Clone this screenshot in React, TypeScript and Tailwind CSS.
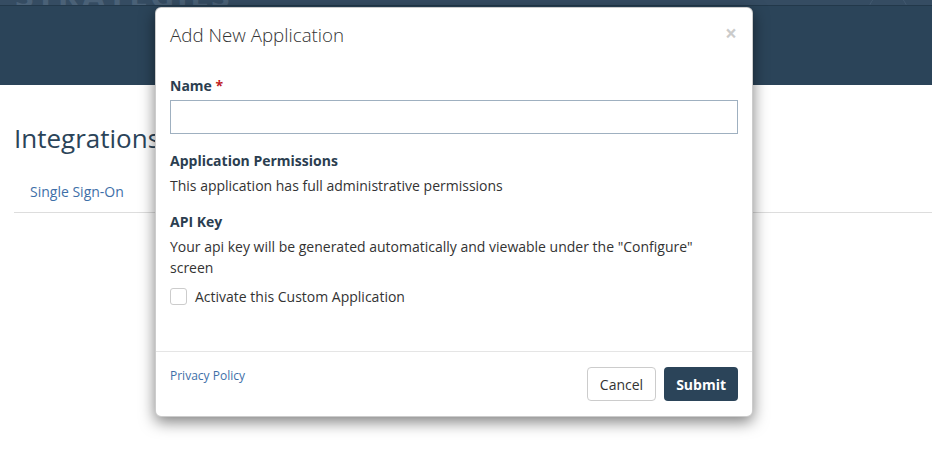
import React from "react";

export default function App() {
  return (
    <div className="relative w-[932px] h-[474px] overflow-hidden bg-white" style={{ fontFamily: '"Open Sans", "Liberation Sans", sans-serif' }}>
      {/* top strip */}
      <div className="h-[6px] bg-[#354c62] overflow-hidden relative border-b border-[#22384a]">
        <div className="absolute left-[15px] top-[-22px] text-[34px] font-bold tracking-[2px] text-[#4a6177] leading-none">STRATEGIES</div>
        <div className="absolute left-[868px] top-[-8px] w-[40px] h-[40px] rounded-full border border-[#42596f]"></div>
      </div>
      {/* header */}
      <div className="h-[79px] bg-[#2b4459]"></div>
      {/* content */}
      <div className="pl-[14px]">
        <div className="pt-[38px] text-[26px] leading-[30px] text-[#2b4459]">Integrations</div>
        <div className="mt-[19px] border-b border-[#dddddd] flex">
          <div className="px-4 py-[10px] text-[14px] leading-[20px] text-[#3e6fa8]">Single Sign-On</div>
        </div>
      </div>

      {/* modal */}
      <div className="absolute left-[155px] top-[7px] w-[598px] bg-white rounded-[6px] border border-[rgba(0,0,0,0.2)] shadow-[0_5px_15px_rgba(0,0,0,0.5)] text-[#333333]">
        <div className="px-[14px] pt-[14px] pb-[13px] flex items-start justify-between">
          <div className="text-[18.75px] font-light leading-[26px] text-[#333333]">Add New Application</div>
          <div className="text-[21px] font-bold leading-[21px] text-[#000000] opacity-20 mr-[1px] mt-[1px]">×</div>
        </div>
        <div className="px-[14px] pt-[15px] pb-[45px]">
          <div className="text-[14px] font-bold leading-[20px] text-[#2b3e50]">
            Name <span className="text-[#c0221f]">*</span>
          </div>
          <div className="mt-[4px] h-[34px] border border-[#9fb0c0] bg-white"></div>
          <div className="mt-[17px] text-[14px] font-bold leading-[20px] text-[#2b3e50]">Application Permissions</div>
          <div className="mt-[5px] text-[14px] leading-[20px]">This application has full administrative permissions</div>
          <div className="mt-[16px] text-[14px] font-bold leading-[20px] text-[#2b3e50]">API Key</div>
          <div className="mt-[4px] text-[14px] leading-[21px] w-[540px]">
            Your api key will be generated automatically and viewable under the "Configure" screen
          </div>
          <div className="mt-[9px] flex items-center h-[19px]">
            <div className="w-[17px] h-[17px] border border-[#cccccc] rounded-[3px] bg-white"></div>
            <div className="ml-[8px] text-[14px] leading-[20px]">Activate this Custom Application</div>
          </div>
        </div>
        <div className="border-t border-[#e5e5e5] px-[14px] pt-[15px] pb-[15px] flex items-start justify-between">
          <div className="text-[12px] leading-[17px] text-[#3e6fa8]">Privacy Policy</div>
          <div className="flex gap-[8px]">
            <div className="h-[34px] px-[12px] flex items-center border border-[#cccccc] rounded-[4px] text-[14px] text-[#333333] bg-white">Cancel</div>
            <div className="h-[34px] px-[12px] flex items-center rounded-[4px] text-[14px] font-bold text-white bg-[#2b4459]">Submit</div>
          </div>
        </div>
      </div>
    </div>
  );
}
